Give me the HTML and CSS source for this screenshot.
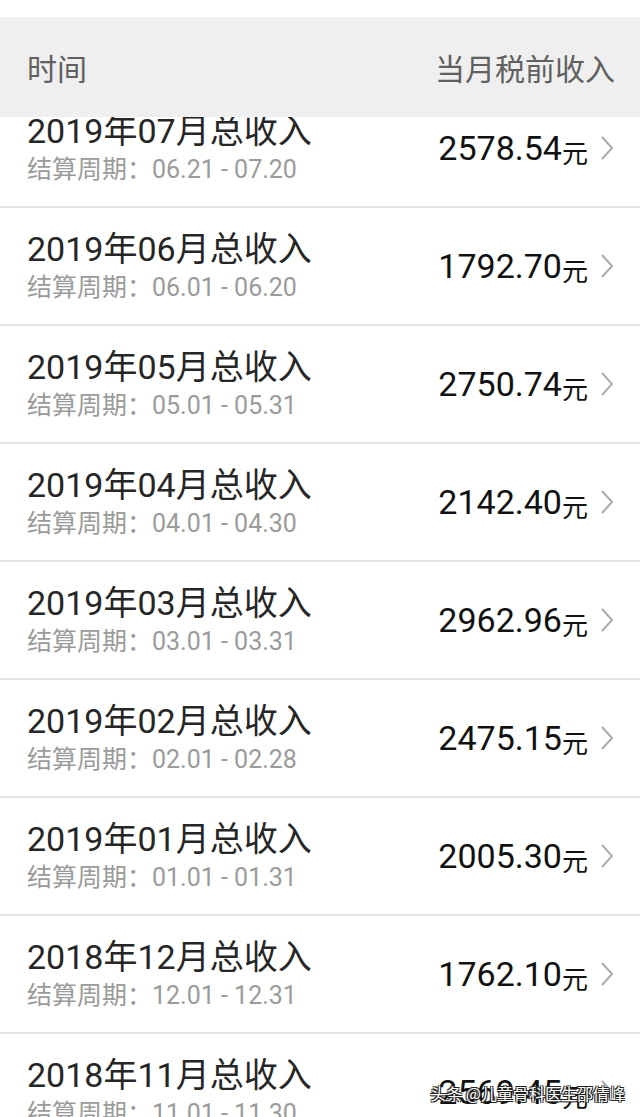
FILE: index.html
```html
<!DOCTYPE html>
<html lang="zh-CN">
<head>
<meta charset="utf-8">
<title>收入明细</title>
<link rel="stylesheet" href="styles.css">
</head>
<body>
<div class="screen">
  <div class="head">
    <span class="head-left">时间</span>
    <span class="head-right">当月税前收入</span>
  </div>
  <ul class="list">
    <li class="row">
      <div class="info"><div class="title">2019年07月总收入</div><div class="sub">结算周期：06.21 - 07.20</div></div>
      <div class="amount"><span class="num">2578.54</span><span class="unit">元</span><svg class="chev" viewBox="0 0 14 24" width="14" height="24"><polyline points="2,1 12,12 2,23"/></svg></div>
    </li>
    <li class="row">
      <div class="info"><div class="title">2019年06月总收入</div><div class="sub">结算周期：06.01 - 06.20</div></div>
      <div class="amount"><span class="num">1792.70</span><span class="unit">元</span><svg class="chev" viewBox="0 0 14 24" width="14" height="24"><polyline points="2,1 12,12 2,23"/></svg></div>
    </li>
    <li class="row">
      <div class="info"><div class="title">2019年05月总收入</div><div class="sub">结算周期：05.01 - 05.31</div></div>
      <div class="amount"><span class="num">2750.74</span><span class="unit">元</span><svg class="chev" viewBox="0 0 14 24" width="14" height="24"><polyline points="2,1 12,12 2,23"/></svg></div>
    </li>
    <li class="row">
      <div class="info"><div class="title">2019年04月总收入</div><div class="sub">结算周期：04.01 - 04.30</div></div>
      <div class="amount"><span class="num">2142.40</span><span class="unit">元</span><svg class="chev" viewBox="0 0 14 24" width="14" height="24"><polyline points="2,1 12,12 2,23"/></svg></div>
    </li>
    <li class="row">
      <div class="info"><div class="title">2019年03月总收入</div><div class="sub">结算周期：03.01 - 03.31</div></div>
      <div class="amount"><span class="num">2962.96</span><span class="unit">元</span><svg class="chev" viewBox="0 0 14 24" width="14" height="24"><polyline points="2,1 12,12 2,23"/></svg></div>
    </li>
    <li class="row">
      <div class="info"><div class="title">2019年02月总收入</div><div class="sub">结算周期：02.01 - 02.28</div></div>
      <div class="amount"><span class="num">2475.15</span><span class="unit">元</span><svg class="chev" viewBox="0 0 14 24" width="14" height="24"><polyline points="2,1 12,12 2,23"/></svg></div>
    </li>
    <li class="row">
      <div class="info"><div class="title">2019年01月总收入</div><div class="sub">结算周期：01.01 - 01.31</div></div>
      <div class="amount"><span class="num">2005.30</span><span class="unit">元</span><svg class="chev" viewBox="0 0 14 24" width="14" height="24"><polyline points="2,1 12,12 2,23"/></svg></div>
    </li>
    <li class="row">
      <div class="info"><div class="title">2018年12月总收入</div><div class="sub">结算周期：12.01 - 12.31</div></div>
      <div class="amount"><span class="num">1762.10</span><span class="unit">元</span><svg class="chev" viewBox="0 0 14 24" width="14" height="24"><polyline points="2,1 12,12 2,23"/></svg></div>
    </li>
    <li class="row">
      <div class="info"><div class="title">2018年11月总收入</div><div class="sub">结算周期：11.01 - 11.30</div></div>
      <div class="amount"><span class="num">2569.45</span><span class="unit">元</span><svg class="chev" viewBox="0 0 14 24" width="14" height="24"><polyline points="2,1 12,12 2,23"/></svg></div>
    </li>
  </ul>
  <div class="watermark">头条 @儿童骨科医生邵倩峰</div>
</div>
</body>
</html>
```
FILE: styles.css
```css
html, body {
  margin: 0;
  padding: 0;
  background: #ffffff;
}
body {
  height: 1117px;
  overflow: hidden;
  font-family: Roboto, "Noto Sans CJK SC", sans-serif;
}
.screen {
  position: relative;
  margin-top: 17px;
  padding-top: 73px;
  height: 1027px;
  overflow: hidden;
}
.head {
  position: absolute;
  top: 0;
  left: 0;
  right: 0;
  height: 100px;
  z-index: 2;
  background: #efefef;
  display: flex;
  align-items: center;
  justify-content: space-between;
  padding: 0 25px 0 27px;
  font-size: 30px;
  color: #606060;
}
.list {
  list-style: none;
  margin: 0;
  padding: 0;
}
.row {
  height: 116px;
  border-bottom: 2px solid #e2e2e2;
  display: flex;
  align-items: center;
  justify-content: space-between;
  padding: 0 26px 0 27px;
}
.info {
  display: flex;
  flex-direction: column;
  padding-top: 3px;
}
.title {
  font-size: 34px;
  line-height: 40px;
  color: #262626;
}
.sub {
  font-size: 25px;
  line-height: 38px;
  color: #9b9b9b;
}
.amount {
  display: flex;
  align-items: center;
  color: #111111;
}
.num {
  font-size: 34px;
}
.unit {
  font-size: 26px;
  margin-top: 6px;
}
.chev {
  margin-left: 12px;
  fill: none;
  stroke: #ababab;
  stroke-width: 2;
}
.watermark {
  position: absolute;
  right: 15px;
  bottom: 12px;
  z-index: 3;
  font-family: "Noto Sans CJK SC", sans-serif;
  font-size: 16px;
  color: #ffffff;
  text-shadow: -1px -1px 0 #222, 1px -1px 0 #222, -1px 1px 0 #222, 1px 1px 0 #222;
}
```
